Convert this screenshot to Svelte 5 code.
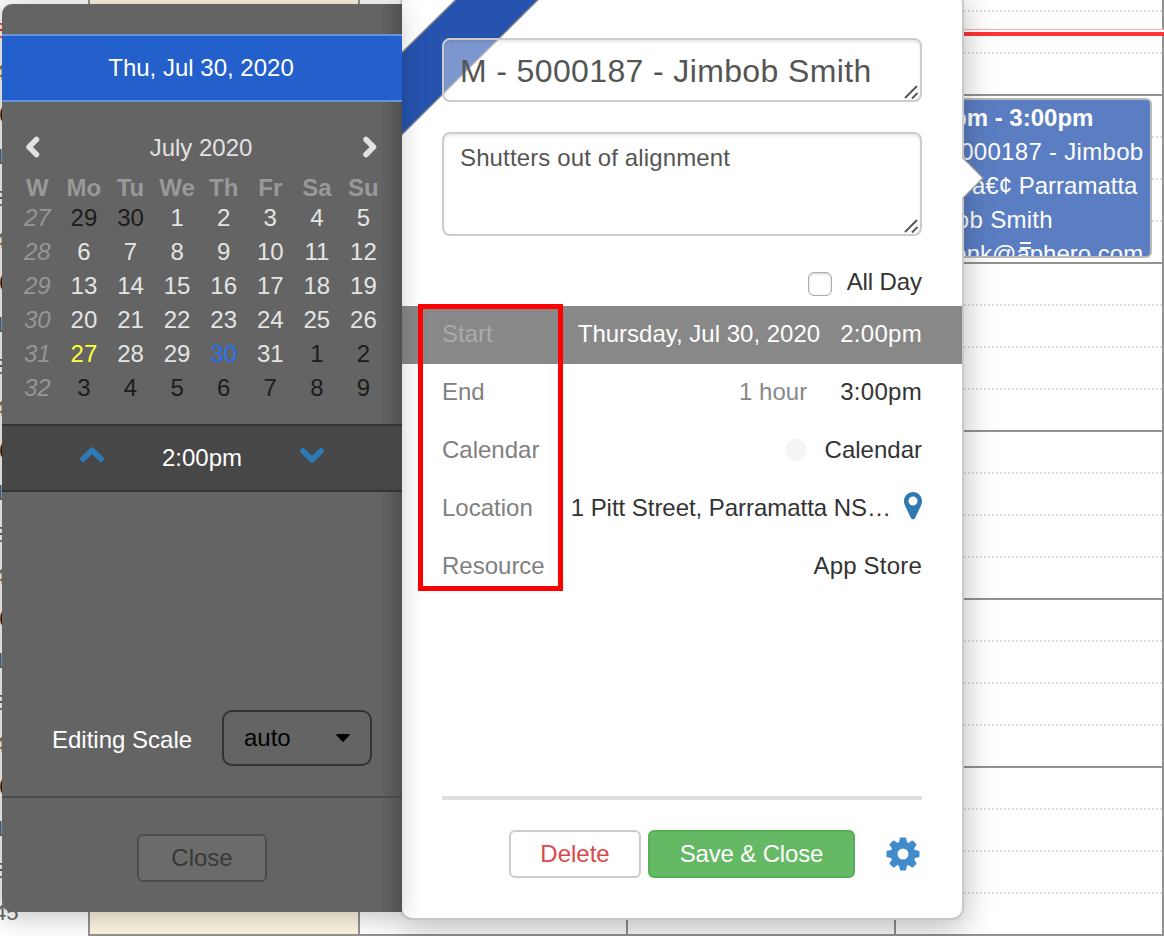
<script lang="ts">
  const quarters = ["15", "30", "45", "2:00"];
  const slots = Array.from({ length: 23 }, (_, i) => ({
    label: i === 0 ? "" : quarters[i % 4],
    hour: i % 4 === 3,
    last: i % 4 === 2,
    now: i === 1,
  }));

  const columns = ["weekend", "", "", ""];
  const dayNames = ["W", "Mo", "Tu", "We", "Th", "Fr", "Sa", "Su"];
  const weeks = [
    { no: 27, days: [29, 30, 1, 2, 3, 4, 5] },
    { no: 28, days: [6, 7, 8, 9, 10, 11, 12] },
    { no: 29, days: [13, 14, 15, 16, 17, 18, 19] },
    { no: 30, days: [20, 21, 22, 23, 24, 25, 26] },
    { no: 31, days: [27, 28, 29, 30, 31, 1, 2] },
    { no: 32, days: [3, 4, 5, 6, 7, 8, 9] },
  ];

  // State of a day cell: other month, today, or the selected day
  const dayClass = (week: number, day: number) => {
    if ((week === 27 && day > 20) || (week > 30 && day < 10)) return "other";
    if (week === 31 && day === 27) return "today";
    if (week === 31 && day === 30) return "selected";
    return "";
  };

  let title = "M - 5000187 - Jimbob Smith";
  let notes = "Shutters out of alignment";
  let allDay = false;
</script>

<svelte:head>
  <title>Schedule</title>
</svelte:head>

<main>
  <div class="schedule">
    <div class="times">
      {#each slots as slot}
        <div class="slot" class:hour={slot.hour} class:now={slot.now}>
          <span>{slot.label}</span>
        </div>
      {/each}
    </div>
    {#each columns as column}
      <div class="column {column}">
        {#each slots as slot}
          <div class="cell" class:last={slot.last}></div>
        {/each}
      </div>
    {/each}
  </div>
  <div class="now-line"></div>

  <div class="event">
    <b>2:00pm - 3:00pm</b>
    <span class="wide">M - 5000187 - Jimbob</span>
    <span>Smith â€¢ Parramatta</span>
    <span class="wide">Jimbob Smith</span>
    <span>cschenk@aphero.com</span>
    <i class="handle"></i>
  </div>

  <section class="popover">
    <svg class="ribbon" width="140" height="145" viewBox="0 0 140 145">
      <path d="M-2 60.500 L61.500 -2 H144 L-2 142.500 Z" fill="#2553ae" stroke="#8a8a8a" stroke-width="1.4" />
    </svg>

    <div class="fields">
      <div class="box title">
        <span>{title}</span>
        <svg class="grip" width="16" height="16" viewBox="0 0 16 16">
          <path d="M2 14 L14 2 M9 14.5 L14.5 9" />
        </svg>
      </div>
      <div class="box notes">
        <span>{notes}</span>
        <svg class="grip" width="16" height="16" viewBox="0 0 16 16">
          <path d="M2 14 L14 2 M9 14.5 L14.5 9" />
        </svg>
      </div>
      <label class="all-day">
        <input type="checkbox" bind:checked={allDay} />
        All Day
      </label>
    </div>

    <div class="row active">
      <span class="name">Start</span>
      <span>Thursday, Jul 30, 2020</span>
      <span class="time">2:00pm</span>
    </div>
    <div class="row">
      <span class="name">End</span>
      <span class="muted">1 hour</span>
      <span class="time end">3:00pm</span>
    </div>
    <div class="row">
      <span class="name">Calendar</span>
      <i class="dot"></i>
      <span>Calendar</span>
    </div>
    <div class="row">
      <span class="name">Location</span>
      <span class="address">1 Pitt Street, Parramatta NS…</span>
      <svg class="pin" width="18" height="28" viewBox="0 0 18 28">
        <path
          fill-rule="evenodd"
          d="M9 0 C4 0 0 4 0 9 C0 11 .5 12.600 1.300 14.200 L6.900 26 C7.800 27.800 10.200 27.800 11.100 26 L16.700 14.200 C17.500 12.600 18 11 18 9 C18 4 14 0 9 0 Z M9 4.500 A4.500 4.500 0 1 1 9 13.500 A4.500 4.500 0 1 1 9 4.500 Z" />
      </svg>
    </div>
    <div class="row">
      <span class="name">Resource</span>
      <span class="resource">App Store</span>
    </div>

    <footer>
      <button class="delete">Delete</button>
      <button class="save">Save &amp; Close</button>
      <svg class="gear" width="34" height="34" viewBox="-17 -17 34 34">
        <g>
          {#each [0, 45, 90, 135, 180, 225, 270, 315] as angle}
            <path d="M-4.200 -10 L-3.200 -15.800 Q-3 -16.500 -2.300 -16.500 H2.300 Q3 -16.500 3.200 -15.800 L4.200 -10 Z" transform="rotate({angle})" />
          {/each}
        </g>
        <path fill-rule="evenodd" d="M0 -12.500 A12.500 12.500 0 1 1 0 12.500 A12.500 12.500 0 1 1 0 -12.500 Z M0 -5.500 A5.500 5.500 0 1 0 0 5.500 A5.500 5.500 0 1 0 0 -5.500 Z" />
      </svg>
    </footer>

    <svg class="arrow" width="24" height="44" viewBox="0 0 24 44">
      <path d="M0 2 H2 L22 22 L2 42 H0 Z" fill="#fff" />
      <path d="M1.500 1.500 L22 22 L1.500 42.500" fill="none" stroke="#999" stroke-width="1.300" />
    </svg>
    <div class="highlight"></div>
  </section>

  <aside>
    <header>Thu, Jul 30, 2020</header>
    <div class="month">
      <svg width="16" height="24" viewBox="0 0 16 24"><path d="M11.500 3.500 L4 11 L11.500 18.500" /></svg>
      <span>July 2020</span>
      <svg width="16" height="24" viewBox="0 0 16 24"><path d="M5 3.500 L12.500 11 L5 18.500" /></svg>
    </div>
    <div class="days">
      {#each dayNames as name}
        <b>{name}</b>
      {/each}
      {#each weeks as week}
        <em>{week.no}</em>
        {#each week.days as day}
          <span class={dayClass(week.no, day)}>{day}</span>
        {/each}
      {/each}
    </div>
    <div class="clock">
      <svg width="28" height="20" viewBox="0 0 28 20"><path d="M5 11 L14 2.200 L23 11" /></svg>
      <span>2:00pm</span>
      <svg width="28" height="20" viewBox="0 0 28 20"><path d="M5 3 L14 11.800 L23 3" /></svg>
    </div>
    <div class="scale">
      <span>Editing Scale</span>
      <div class="select">
        auto
        <svg width="14" height="8" viewBox="0 0 14 8"><path d="M1 0 H13 Q14.500 0 13.500 1.200 L8 7.300 Q7 8.300 6 7.300 L.500 1.200 Q-.500 0 1 0 Z" /></svg>
      </div>
    </div>
    <div class="bottom">
      <button>Close</button>
    </div>
  </aside>
</main>

<style>
  :global(body) {
    margin: 0;
    background: #fff;
  }

  main {
    position: relative;
    width: 1164px;
    height: 936px;
    overflow: hidden;
    font-family: "Liberation Sans", Arial, sans-serif;
    font-size: 24px;
    line-height: 34px;
    color: #333;
    white-space: nowrap;
  }
  main * {
    box-sizing: border-box;
  }

  .schedule {
    display: grid;
    grid-template-columns: 88px 272px 268px 268px 268px;
    height: 936px;
  }
  .slot {
    height: 42px;
    padding-top: 2px;
    font-size: 22px;
    color: #666;
  }
  .slot:first-child,
  .cell:first-child {
    height: 12px;
    overflow: hidden;
  }
  .slot span {
    margin-left: -6px;
  }
  .slot.hour {
    font-size: 24px;
    color: #222;
  }
  .slot.hour span {
    margin-left: -34px;
  }
  .slot.now {
    color: #f33;
  }
  .column {
    border-right: 2px solid #929292;
  }
  .column.weekend {
    border-left: 2px solid #929292;
    background: #fcf6e1;
  }
  .cell {
    height: 42px;
    border-bottom: 2px dotted #ddd;
  }
  .cell.last {
    border-bottom: 2px solid #929292;
  }
  .now-line {
    position: absolute;
    top: 29px;
    left: 360px;
    right: 0;
    height: 7px;
    background: linear-gradient(#faa 1px, #fff 1px, #fff 3px, #ff3434 3px);
  }

  .event {
    position: absolute;
    top: 98px;
    left: 898px;
    width: 254px;
    height: 160px;
    padding: 1px 4px;
    overflow: hidden;
    display: flex;
    flex-direction: column;
    border: 2px solid #bbb;
    border-radius: 6px;
    background: #5b7ec3;
    color: #fff;
  }
  .event b,
  .event span {
    flex: none;
    height: 34px;
  }
  .event .wide {
    letter-spacing: 0.3px;
  }
  .handle {
    position: absolute;
    left: 120px;
    bottom: 7px;
    width: 11px;
    height: 7px;
    border: solid #fff;
    border-width: 2px 0;
  }

  .popover {
    position: absolute;
    top: -8px;
    left: 400px;
    width: 564px;
    height: 928px;
    border: 2px solid #c8c8c8;
    border-radius: 12px;
    background: #fff;
    box-shadow: 0 8px 32px rgba(0, 0, 0, 0.28);
  }
  .ribbon {
    position: absolute;
    top: 0;
    left: 0;
    border-radius: 10px 0 0 0;
  }
  .fields {
    position: relative;
    height: 312px;
    padding: 44px 40px 0;
  }
  .box {
    position: relative;
    padding: 0 16px;
    border: 2px solid #ccc;
    border-radius: 8px;
    background: rgba(255, 255, 255, 0.4);
    box-shadow: inset 0 2px 3px rgba(0, 0, 0, 0.09);
    color: #555;
  }
  .title {
    height: 64px;
    font-size: 32px;
    line-height: 62px;
    letter-spacing: 0.37px;
  }
  .notes {
    height: 104px;
    margin-top: 30px;
    padding-top: 7px;
    letter-spacing: 0.13px;
  }
  .grip {
    position: absolute;
    right: 1px;
    bottom: 0;
    fill: none;
    stroke: #555;
    stroke-width: 1.9;
  }
  .all-day {
    display: flex;
    justify-content: flex-end;
    align-items: center;
    gap: 15px;
    margin-top: 29px;
    letter-spacing: -0.1px;
  }
  .all-day input {
    appearance: none;
    width: 24px;
    height: 24px;
    margin: 4px 0 0;
    border: 1.5px solid #aaa;
    border-radius: 6px;
    box-shadow: inset 0 1px 3px rgba(0, 0, 0, 0.18);
  }

  .row {
    display: flex;
    align-items: center;
    height: 58px;
    padding: 0 40px 2px;
  }
  .name {
    flex: 1;
    color: #808080;
  }
  .row.active {
    background: #888;
    color: #fff;
  }
  .active .name {
    color: #aaa;
  }
  .time {
    margin-left: 20px;
    letter-spacing: 0.3px;
  }
  .time.end {
    margin-left: 33px;
  }
  .muted {
    color: #888;
  }
  .resource {
    letter-spacing: 0.2px;
  }
  .dot {
    width: 22px;
    height: 22px;
    margin-right: 18px;
    border-radius: 50%;
    background: #f5f5f5;
  }
  .address {
    margin-right: 13px;
    letter-spacing: -0.04px;
  }
  .pin {
    margin-bottom: 5px;
    fill: #2f79b1;
  }

  footer {
    display: flex;
    justify-content: flex-end;
    align-items: flex-start;
    margin: 200px 40px 0;
    padding-top: 30px;
    border-top: 4px solid #e0e0e0;
  }
  button {
    height: 48px;
    padding: 0;
    border: 2px solid #ccc;
    border-radius: 6px;
    background: #fff;
    font: inherit;
    line-height: 42px;
  }
  .delete {
    width: 132px;
    color: #d9484b;
  }
  .save {
    width: 207px;
    margin: 0 31px 0 7px;
    border-color: #56b156;
    background: #65b965;
    color: #fff;
    letter-spacing: -0.15px;
  }
  .gear {
    margin: 7px 2px 0 0;
    fill: #428bca;
  }

  .arrow {
    position: absolute;
    top: 162px;
    right: -23px;
  }
  .highlight {
    position: absolute;
    top: 310px;
    left: 16px;
    width: 145px;
    height: 287px;
    border: 5px solid #f00;
  }

  aside {
    position: absolute;
    top: 4px;
    left: 2px;
    width: 400px;
    height: 908px;
    border-radius: 10px 0 0 10px;
    background: linear-gradient(to left, rgba(0, 0, 0, 0.2), transparent 22px) #646464;
    box-shadow: -4px 4px 28px rgba(0, 0, 0, 0.25);
    color: #fff;
  }
  header {
    height: 68px;
    margin-top: 30px;
    padding-right: 2px;
    border: solid #6890dc;
    border-width: 2px 0;
    background: #2360cb;
    line-height: 64px;
    text-align: center;
  }
  .month {
    display: flex;
    justify-content: space-between;
    align-items: center;
    height: 34px;
    margin: 29px 25px 0 23px;
    color: #e2e2e2;
  }
  .month svg {
    overflow: visible;
    fill: none;
    stroke: #e2e2e2;
    stroke-width: 5.500;
    stroke-linecap: round;
    stroke-linejoin: round;
  }
  .days {
    display: grid;
    grid-template-columns: repeat(8, 46.6px);
    grid-template-rows: 34px;
    grid-auto-rows: 34px;
    margin: 6px 0 0 12px;
    text-align: center;
    color: #e4e4e4;
  }
  .days b {
    color: #999;
  }
  .days em {
    color: #969696;
  }
  .days span,
  .days em {
    margin-top: -4px;
  }
  .days .other {
    color: #1c1c1c;
  }
  .days .today {
    color: #ffff3c;
  }
  .days .selected {
    color: #2371f5;
  }
  .clock {
    display: flex;
    justify-content: space-between;
    align-items: center;
    height: 68px;
    margin-top: 15px;
    padding: 0 76px;
    border: solid #333;
    border-width: 2px 0;
    background: #474747;
  }
  .clock svg {
    overflow: visible;
    fill: none;
    stroke: #2f7ab5;
    stroke-width: 5.800;
    stroke-linecap: round;
    stroke-linejoin: round;
  }
  .scale {
    display: flex;
    justify-content: space-between;
    align-items: center;
    height: 56px;
    margin: 218px 30px 30px 50px;
  }
  .scale > span {
    padding-top: 4px;
  }
  .select {
    display: flex;
    justify-content: space-between;
    align-items: center;
    width: 150px;
    height: 56px;
    padding: 0 20px;
    border: 2px solid #333;
    border-radius: 10px;
    color: #000;
  }
  .bottom {
    display: flex;
    justify-content: center;
    padding-top: 36px;
    border-top: 2px solid #4a4a4a;
  }
  .bottom button {
    width: 130px;
    border-color: #4c4c4c;
    background: #6b6b6b;
    color: #383838;
  }
</style>
